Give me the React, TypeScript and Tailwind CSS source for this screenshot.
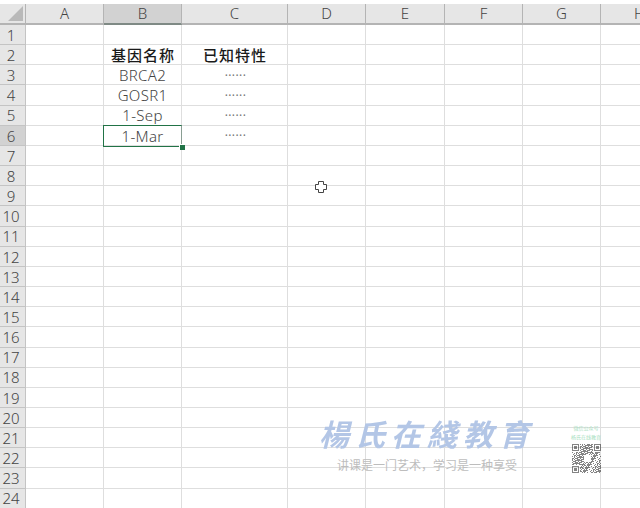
const columns = ["A", "B", "C", "D", "E", "F", "G", "H"];
const rows = Array.from({ length: 24 }, (_, i) => i + 1);

const cells: Record<string, string> = {
  B2: "基因名称",
  C2: "已知特性",
  B3: "BRCA2",
  C3: "······",
  B4: "GOSR1",
  C4: "······",
  B5: "1-Sep",
  C5: "······",
  B6: "1-Mar",
  C6: "······",
};

// fake qr pattern, seeded so it stays the same on every render
function QrCode() {
  const size = 29;
  const dots: { x: number; y: number }[] = [];
  let seed = 7;
  for (let y = 0; y < size; y++) {
    for (let x = 0; x < size; x++) {
      seed = (seed * 73 + 41) % 1021;
      const inFinder = (x < 8 && y < 8) || (x > 20 && y < 8) || (x < 8 && y > 20);
      const inLogo = Math.abs(x - 15) < 4 && Math.abs(y - 14) < 4;
      if (!inFinder && !inLogo && seed % 2 === 0) dots.push({ x, y });
    }
  }
  const finders = [
    [0, 0],
    [22, 0],
    [0, 22],
  ];
  return (
    <svg viewBox="0 0 29 29" className="mt-[2px] h-[29px] w-[29px] opacity-60 blur-[0.4px]">
      {dots.map((d) => (
        <rect key={`${d.x}-${d.y}`} x={d.x} y={d.y} width="1" height="1" fill="#333" />
      ))}
      {finders.map(([x, y]) => (
        <g key={`${x}-${y}`}>
          <rect x={x + 0.5} y={y + 0.5} width="6" height="6" fill="none" stroke="#333" />
          <rect x={x + 2} y={y + 2} width="3" height="3" fill="#333" />
        </g>
      ))}
    </svg>
  );
}

function Watermark() {
  return (
    <div className="absolute left-[320px] top-[415px] flex items-start">
      <div className="flex w-[214px] flex-col items-center">
        <div className="text-[30px] leading-[40px] font-bold italic tracking-[6px] whitespace-nowrap text-[#b3c6e6] blur-[0.3px]">
          楊氏在綫教育
        </div>
        <div className="mt-[3px] text-[12px] leading-[16px] whitespace-nowrap text-[#bdbdbd]">
          讲课是一门艺术，学习是一种享受
        </div>
      </div>
      <div className="ml-[37px] flex w-[30px] flex-col items-center">
        <div className="mt-[9px] text-[5px] leading-[9px] whitespace-nowrap text-[#a8e0c0]">微信公众号</div>
        <div className="text-[5px] leading-[9px] whitespace-nowrap text-[#a8e0c0]">杨氏在线教育</div>
        <QrCode />
      </div>
    </div>
  );
}

export default function App() {
  return (
    <div className="relative h-[508px] w-[640px] overflow-hidden bg-white pt-[4px] font-['Noto_Sans','Noto_Sans_CJK_SC',sans-serif]">
      <div className="grid grid-cols-[26px_78px_78px_106px_78px_79px_78px_78px_78px] grid-rows-[21px_repeat(24,20.17px)]">
        <div className="relative border-r border-b-2 border-[#b4b4b4] bg-[#e6e6e6]">
          <svg viewBox="0 0 16 16" className="absolute right-[2px] bottom-[2px] h-[15px] w-[15px]">
            <path d="M16 0V16H0Z" fill="#b9b9b9" />
          </svg>
        </div>
        {columns.map((col) => (
          <div
            key={col}
            className={`flex items-center justify-center border-r border-b-2 border-[#b4b4b4] text-[15px] font-light text-[#444] ${
              col === "B" ? "bg-[#d2d2d2] border-b-[#7f8a85]" : "bg-[#e6e6e6]"
            }`}
          >
            {col}
          </div>
        ))}

        {rows.map((row) => (
          <div key={row} className="contents">
            <div
              className={`flex items-center justify-center border-r border-b border-[#c4c4c4] pt-[1px] pr-[3px] text-[15px] font-light text-[#444] ${
                row === 6 ? "bg-[#d2d2d2]" : "bg-[#e6e6e6]"
              }`}
            >
              {row}
            </div>
            {columns.map((col) => {
              const text = cells[`${col}${row}`];
              const isHeader = row === 2;
              const isDots = text === "······";
              const active = col === "B" && row === 6;
              return (
                <div
                  key={col}
                  className={`relative flex items-center justify-center whitespace-nowrap border-r border-b border-[#dedede] ${
                    active ? "z-10" : ""
                  } ${
                    isHeader
                      ? "pt-[2px] pl-[1px] font-['Noto_Sans_CJK_SC',sans-serif] text-[15px] font-medium tracking-[1px] text-[#1a1a1a]"
                      : isDots
                        ? "pt-[2px] pl-[2px] text-[12px] tracking-[0.4px] text-[#777]"
                        : "pt-[1px] text-[15px] font-light tracking-[0.3px] text-[#444]"
                  }`}
                >
                  {text}
                  {active && (
                    <div className="absolute -top-px -left-px h-[22px] w-[79px] border-[1.5px] border-[#217346] border-r-[#8a9e93]">
                      <div className="absolute -right-[4px] -bottom-[4px] h-[6px] w-[6px] border-t border-l border-white bg-[#217346]" />
                    </div>
                  )}
                </div>
              );
            })}
          </div>
        ))}
      </div>

      <svg viewBox="0 0 14 14" className="absolute left-[314px] top-[180px] h-[14px] w-[14px]">
        <path
          d="M4.5 1.5H9.5V4.5H12.5V9.5H9.5V12.5H4.5V9.5H1.5V4.5H4.5Z"
          fill="#fff"
          stroke="#444"
          strokeWidth="1"
        />
      </svg>

      <Watermark />
    </div>
  );
}
